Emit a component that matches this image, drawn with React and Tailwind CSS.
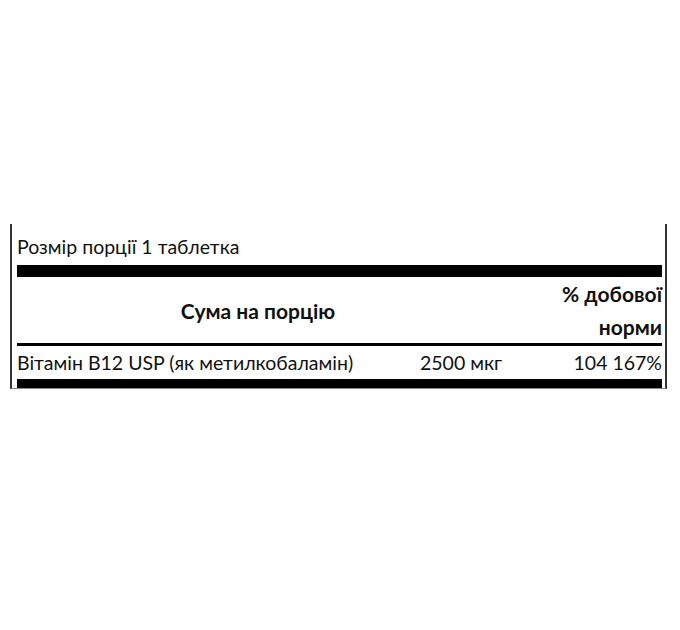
export default function App() {
  return (
    <div className="w-[680px] h-[630px] bg-white" style={{ fontFamily: 'Lato, "Liberation Sans", sans-serif' }}>
      <div className="pt-[224px] pl-[10px]">
        <div className="w-[657px] border-l-2 border-r-2 border-b border-l-[#333] border-r-[#333] border-b-[#888] pl-[5px] pr-[3px] text-[19.5px] leading-[33px] text-[#111]">
          <div className="pt-[6px] pb-[2px]">Розмір порції 1 таблетка</div>
          <div className="h-[12px] bg-black" />
          <div className="flex items-center border-b-[3px] border-black text-[21px]">
            <div className="w-[482px] text-center font-bold">Сума на порцію</div>
            <div className="flex-1 text-right font-bold">
              <div>% добової</div>
              <div>норми</div>
            </div>
          </div>
          <div className="flex">
            <div className="w-[403px]">Вітамін B12 USP (як метилкобаламін)</div>
            <div className="w-[120px]">2500 мкг</div>
            <div className="flex-1 text-right">104 167%</div>
          </div>
          <div className="h-[9px] bg-black" />
        </div>
      </div>
    </div>
  );
}
